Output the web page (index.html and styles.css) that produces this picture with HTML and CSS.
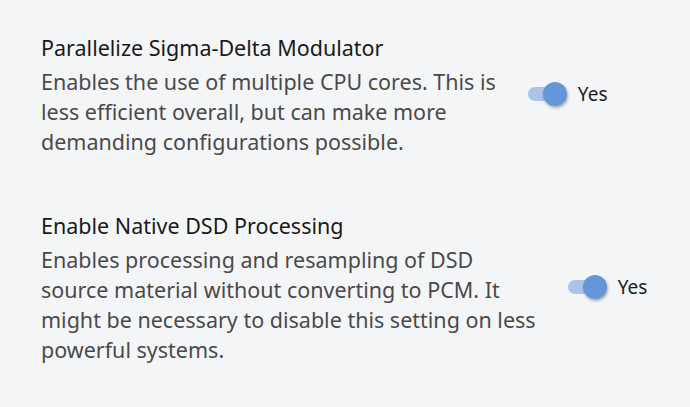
FILE: index.html
```html
<!DOCTYPE html>
<html lang="en">
<head>
    <meta charset="UTF-8">
    <meta name="viewport" content="width=device-width, initial-scale=1.0">
    <title>DSP Settings</title>
    <link rel="stylesheet" href="styles.css">
</head>
<body>
    <div class="settings">
        <!-- Sigma-Delta -->
        <div class="setting">
            <div class="setting-text">
                <div class="setting-title">Parallelize Sigma-Delta Modulator</div>
                <div class="setting-desc">Enables the use of multiple CPU cores. This is<br>less efficient overall, but can make more<br>demanding configurations possible.</div>
            </div>
            <label class="toggle">
                <span class="switch">
                    <span class="track"></span>
                    <span class="knob"></span>
                </span>
                <span class="toggle-label">Yes</span>
            </label>
        </div>

        <!-- Native DSD -->
        <div class="setting">
            <div class="setting-text">
                <div class="setting-title">Enable Native DSD Processing</div>
                <div class="setting-desc">Enables processing and resampling of DSD<br>source material without converting to PCM. It<br>might be necessary to disable this setting on less<br>powerful systems.</div>
            </div>
            <label class="toggle">
                <span class="switch">
                    <span class="track"></span>
                    <span class="knob"></span>
                </span>
                <span class="toggle-label">Yes</span>
            </label>
        </div>
    </div>
</body>
</html>
```

FILE: styles.css
```css
body {
    margin: 0;
    font-family: "Noto Sans", "Open Sans", sans-serif;
    background: #f4f5f7;
    color: #1c1c1c;
}
.settings {
    padding: 34px 41px;
    display: flex;
    flex-direction: column;
    gap: 55px;
}
.setting {
    display: flex;
    align-items: center;
    gap: 32px;
}
.setting-text {
    white-space: nowrap;
}
.setting-title {
    font-size: 21.5px;
    line-height: 28px;
    margin-bottom: 5px;
    color: #1a1a1a;
}
.setting-desc {
    font-size: 21.5px;
    line-height: 30px;
    color: #4a4a4a;
}
.toggle {
    display: flex;
    align-items: center;
    gap: 11px;
    margin-top: -4px;
    cursor: pointer;
}
.switch {
    position: relative;
    width: 39px;
    height: 24px;
    flex: none;
}
.track {
    position: absolute;
    left: 0;
    top: 5px;
    width: 34px;
    height: 14px;
    border-radius: 7px;
    background: #a9c3ea;
}
.knob {
    position: absolute;
    right: 0;
    top: 0;
    width: 24px;
    height: 24px;
    border-radius: 50%;
    background: #6596da;
    box-shadow: 1px 2px 3px rgba(0, 0, 0, 0.3);
}
.toggle-label {
    font-size: 19px;
    color: #1c1c1c;
}
```
